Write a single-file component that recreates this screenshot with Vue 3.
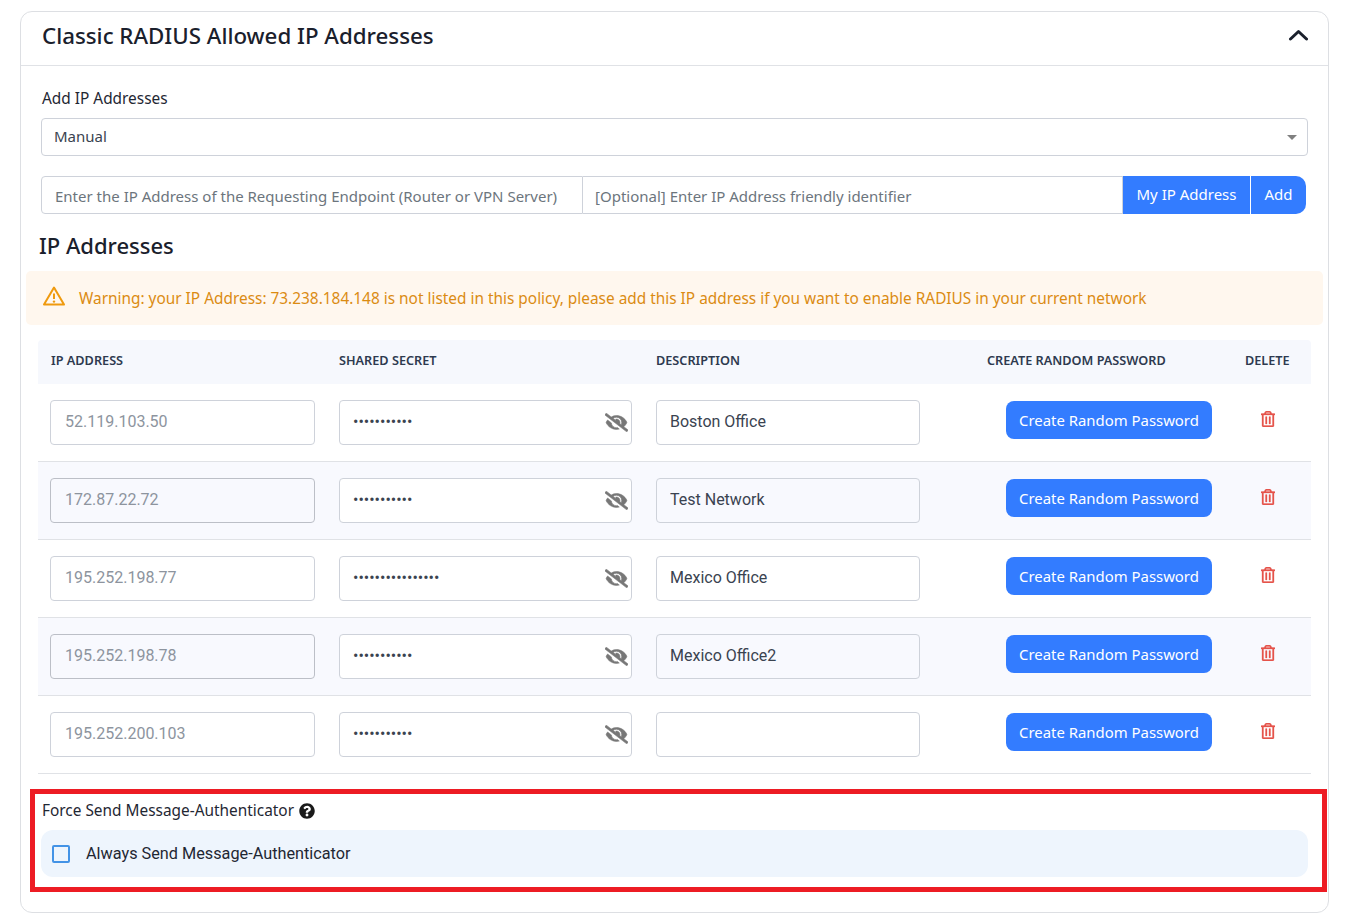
<template>
  <div class="page">
    <div class="card">
      <div class="card-header">
        <h2 class="card-title">Classic RADIUS Allowed IP Addresses</h2>
        <svg class="chevron" viewBox="0 0 20 12" width="20" height="12">
          <path d="M2.5 10 L10.5 2.5 L18.5 10" fill="none" stroke="#1a202c" stroke-width="3" stroke-linecap="round" stroke-linejoin="round" />
        </svg>
      </div>

      <div class="card-body">
        <label class="field-label">Add IP Addresses</label>
        <div class="select-wrap">
          <select class="select">
            <option>Manual</option>
          </select>
          <span class="select-arrow"></span>
        </div>

        <div class="input-group">
          <input class="group-input first" type="text" placeholder="Enter the IP Address of the Requesting Endpoint (Router or VPN Server)" />
          <input class="group-input second" type="text" placeholder="[Optional] Enter IP Address friendly identifier" />
          <button class="btn group-btn">My IP Address</button>
          <button class="btn group-btn last">Add</button>
        </div>

        <h3 class="section-title">IP Addresses</h3>

        <div class="warning">
          <svg class="warning-icon" viewBox="0 0 24 24" width="24" height="24">
            <path d="M12 3.6 L22 20.6 H2 Z" fill="none" stroke="#ef9a0e" stroke-width="2" stroke-linejoin="round" />
            <path d="M12 9.5 V15" stroke="#ef9a0e" stroke-width="2" />
            <circle cx="12" cy="17.6" r="1.2" fill="#ef9a0e" />
          </svg>
          <span>Warning: your IP Address: 73.238.184.148 is not listed in this policy, please add this IP address if you want to enable RADIUS in your current network</span>
        </div>

        <div class="table">
          <div class="row head">
            <div>IP ADDRESS</div>
            <div>SHARED SECRET</div>
            <div>DESCRIPTION</div>
            <div>CREATE RANDOM PASSWORD</div>
            <div>DELETE</div>
          </div>

          <div v-for="item in rows" :key="item.ip" class="row">
            <div>
              <input class="cell-input ip" type="text" :placeholder="item.ip" disabled />
            </div>
            <div class="secret-cell">
              <input class="cell-input secret" type="password" :value="item.secret" />
              <svg class="eye" viewBox="0 0 640 512" width="23" height="19">
                <path fill="#777" stroke="#777" stroke-width="16" d="M320 400c-75.85 0-137.25-58.71-142.9-133.11L72.2 185.82c-13.79 17.3-26.48 35.59-36.72 55.59a32.35 32.35 0 0 0 0 29.19C89.71 376.41 197.07 448 320 448c26.91 0 52.87-4 77.89-10.46L346 397.39a144.13 144.13 0 0 1-26 2.61zm313.82 58.1l-110.55-85.44a331.25 331.25 0 0 0 81.25-102.07 32.35 32.35 0 0 0 0-29.19C550.29 135.59 442.93 64 320 64a308.15 308.15 0 0 0-147.32 37.7L45.46 3.37A16 16 0 0 0 23 6.18L3.37 31.45A16 16 0 0 0 6.18 53.9l588.36 454.73a16 16 0 0 0 22.46-2.81l19.64-25.27a16 16 0 0 0-2.82-22.45zm-183.72-142l-39.3-30.38A94.75 94.75 0 0 0 416 256a94.76 94.76 0 0 0-121.31-92.21A47.65 47.65 0 0 1 304 192a46.64 46.64 0 0 1-1.54 10l-73.61-56.89A142.31 142.31 0 0 1 320 112a143.92 143.92 0 0 1 144 144c0 21.63-5.29 41.79-13.9 60.11z" />
              </svg>
            </div>
            <div>
              <input class="cell-input desc" type="text" :value="item.description" />
            </div>
            <div>
              <button class="btn create-btn">Create Random Password</button>
            </div>
            <div class="delete-cell">
              <svg viewBox="0 0 448 512" width="14" height="16">
                <path fill="#e5534b" stroke="#e5534b" stroke-width="10" d="M268 416h24a12 12 0 0 0 12-12V188a12 12 0 0 0-12-12h-24a12 12 0 0 0-12 12v216a12 12 0 0 0 12 12zM432 80h-82.41l-34-56.7A48 48 0 0 0 274.41 0H173.59a48 48 0 0 0-41.16 23.3L98.41 80H16A16 16 0 0 0 0 96v16a16 16 0 0 0 16 16h16v336a48 48 0 0 0 48 48h288a48 48 0 0 0 48-48V128h16a16 16 0 0 0 16-16V96a16 16 0 0 0-16-16zM171.84 50.91A6 6 0 0 1 177 48h94a6 6 0 0 1 5.15 2.91L293.61 80H154.39zM368 464H80V128h288zm-212-48h24a12 12 0 0 0 12-12V188a12 12 0 0 0-12-12h-24a12 12 0 0 0-12 12v216a12 12 0 0 0 12 12z" />
              </svg>
            </div>
          </div>
        </div>

        <div class="force-box">
          <div class="force-label">
            <span>Force Send Message-Authenticator</span>
            <svg viewBox="0 0 512 512" width="16" height="16">
              <path fill="#1a1a1a" d="M504 256c0 136.997-111.043 248-248 248S8 392.997 8 256C8 119.083 119.043 8 256 8s248 111.083 248 248zM262.655 90c-54.497 0-89.255 22.957-116.549 63.758-3.536 5.286-2.353 12.415 2.715 16.258l34.699 26.31c5.205 3.947 12.621 3.008 16.665-2.122 17.864-22.658 30.113-35.797 57.303-35.797 20.429 0 45.698 13.148 45.698 32.958 0 14.976-12.363 22.667-32.534 33.976C247.128 238.528 216 254.941 216 296v4c0 6.627 5.373 12 12 12h56c6.627 0 12-5.373 12-12v-1.333c0-28.462 83.186-29.647 83.186-106.667 0-58.002-60.165-102-116.531-102zM256 338c-25.365 0-46 20.635-46 46 0 25.364 20.635 46 46 46s46-20.636 46-46c0-25.365-20.635-46-46-46z" />
            </svg>
          </div>
          <div class="force-option">
            <span class="checkbox"></span>
            <span>Always Send Message-Authenticator</span>
          </div>
        </div>
      </div>
    </div>
  </div>
</template>

<script setup>
const rows = [
  { ip: '52.119.103.50', secret: '***********', description: 'Boston Office' },
  { ip: '172.87.22.72', secret: '***********', description: 'Test Network' },
  { ip: '195.252.198.77', secret: '****************', description: 'Mexico Office' },
  { ip: '195.252.198.78', secret: '***********', description: 'Mexico Office2' },
  { ip: '195.252.200.103', secret: '***********', description: '' }
]
</script>

<style scoped>
.page {
  padding: 11px 23px 0 20px;
  font-family: 'Noto Sans', 'Open Sans', sans-serif;
  color: #1a202c;
}

.card {
  height: 902px;
  box-sizing: border-box;
  background: #fff;
  border: 1px solid #dddfe3;
  border-radius: 12px;
}

.card-header {
  display: flex;
  align-items: center;
  justify-content: space-between;
  box-sizing: border-box;
  height: 54px;
  padding: 0 20px 7px 21px;
  border-bottom: 1px solid #e0e2e6;
}

.card-title {
  margin: 0;
  font-size: 22.3px;
  font-weight: 500;
  color: #1a202c;
}

.card-body {
  padding: 23px 20px 0 20px;
}

.field-label {
  display: block;
  height: 20px;
  line-height: 20px;
  padding-left: 1px;
  font-size: 15.4px;
  color: #1f2733;
  margin-bottom: 9px;
}

.select-wrap {
  position: relative;
  height: 38px;
}

.select {
  width: 100%;
  height: 38px;
  box-sizing: border-box;
  appearance: none;
  background: #fff;
  border: 1px solid #ced2da;
  border-radius: 4px;
  padding: 0 12px 2px;
  font-family: inherit;
  font-size: 15px;
  color: #3a4350;
}

.select-arrow {
  position: absolute;
  right: 11px;
  top: 17px;
  width: 0;
  height: 0;
  border-left: 5px solid transparent;
  border-right: 5px solid transparent;
  border-top: 5px solid #808080;
}

.input-group {
  display: flex;
  height: 38px;
  margin: 20px 2px 0 0;
}

.group-input {
  box-sizing: border-box;
  height: 38px;
  border: 1px solid #ced2da;
  background: #fff;
  font-family: inherit;
  font-size: 15px;
  padding: 1px 12px 0;
  outline: none;
}

.group-input::placeholder {
  color: #6c757d;
  opacity: 1;
}

.group-input.first {
  width: 542px;
  flex: none;
  padding-left: 13px;
  border-radius: 4px 0 0 4px;
}

.group-input.second {
  flex: 1;
  min-width: 0;
  border-left: none;
}

.btn {
  border: none;
  background: #337cff;
  color: #fff;
  font-family: inherit;
  font-size: 15px;
  cursor: pointer;
}

.group-btn {
  height: 38px;
  width: 127px;
  flex: none;
  padding: 0 0 2px;
}

.group-btn.last {
  width: 55px;
  margin-left: 1px;
  border-radius: 0 10px 10px 0;
}

.section-title {
  margin: 17px 0 0 -2px;
  height: 28px;
  line-height: 28px;
  font-size: 22px;
  font-weight: 500;
  color: #1a202c;
}

.warning {
  display: flex;
  align-items: center;
  gap: 13px;
  box-sizing: border-box;
  height: 54px;
  margin: 12px -15px 0 -15px;
  padding: 0 0 0 16px;
  background: #fff7ee;
  border-radius: 5px;
  color: #db8b12;
  font-size: 15.4px;
}

.warning-icon {
  flex: none;
  margin-top: -4px;
}

.table {
  margin: 15px -3px 0 -3px;
}

.row {
  display: grid;
  grid-template-columns: 289px 317px 331px 258px 78px;
  align-items: center;
  height: 78px;
  border-bottom: 1px solid #e0e2e6;
  box-sizing: border-box;
}

.row > div {
  padding-left: 12px;
  min-width: 0;
}

.row:nth-child(odd):not(.head) {
  background: #f8f9fe;
}

.row:nth-child(odd):not(.head) .cell-input.ip {
  border-color: #bcbfc7;
}

.row.head {
  height: 44px;
  padding-bottom: 4px;
  border-bottom: none;
  background: #f6f8fd;
  border-radius: 4px 4px 0 0;
  font-size: 12.7px;
  font-weight: 600;
  color: #2e3a4f;
}

.row.head > div:first-child {
  padding-left: 13px;
}

.cell-input {
  display: block;
  box-sizing: border-box;
  height: 45px;
  margin-top: -1px;
  background: transparent;
  border: 1px solid #ced2da;
  border-radius: 4px;
  padding: 0 13px 2px;
  font-family: Roboto, sans-serif;
  font-size: 16px;
  color: #3a4350;
  outline: none;
}

.cell-input.ip {
  width: 265px;
  padding-left: 14px;
}

.cell-input.ip::placeholder {
  color: #8d949e;
  opacity: 1;
}

.secret-cell {
  position: relative;
}

.cell-input.secret {
  width: 293px;
  background: #fff;
}

.eye {
  position: absolute;
  right: 16px;
  top: 12px;
}

.cell-input.desc {
  width: 264px;
}

.create-btn {
  display: block;
  width: 206px;
  height: 38px;
  margin-left: 19px;
  margin-top: -6px;
  border-radius: 8px;
  padding: 0;
  font-size: 14.9px;
}

.delete-cell {
  display: flex;
  margin-top: -7px;
}

.delete-cell svg {
  margin-left: 16px;
}

.force-box {
  box-sizing: border-box;
  height: 103px;
  margin: 15px -19px 0 -11px;
  padding: 7px 14px 0 6px;
  border: 5px solid #ed1c24;
}

.force-label {
  display: flex;
  align-items: center;
  gap: 5px;
  height: 20px;
  padding-left: 1px;
  font-size: 15.4px;
  color: #1f2733;
}

.force-label span,
.force-option span {
  line-height: 20px;
}

.force-option {
  display: flex;
  align-items: center;
  gap: 16px;
  height: 47px;
  margin-top: 9px;
  padding-left: 11px;
  background: #eef5fd;
  border-radius: 12px;
  font-family: Roboto, sans-serif;
  font-size: 16.25px;
  color: #1f2733;
}

.checkbox {
  display: block;
  flex: none;
  box-sizing: border-box;
  width: 18px;
  height: 18px;
  border: 2px solid #4393e6;
  border-radius: 2px;
}
</style>
